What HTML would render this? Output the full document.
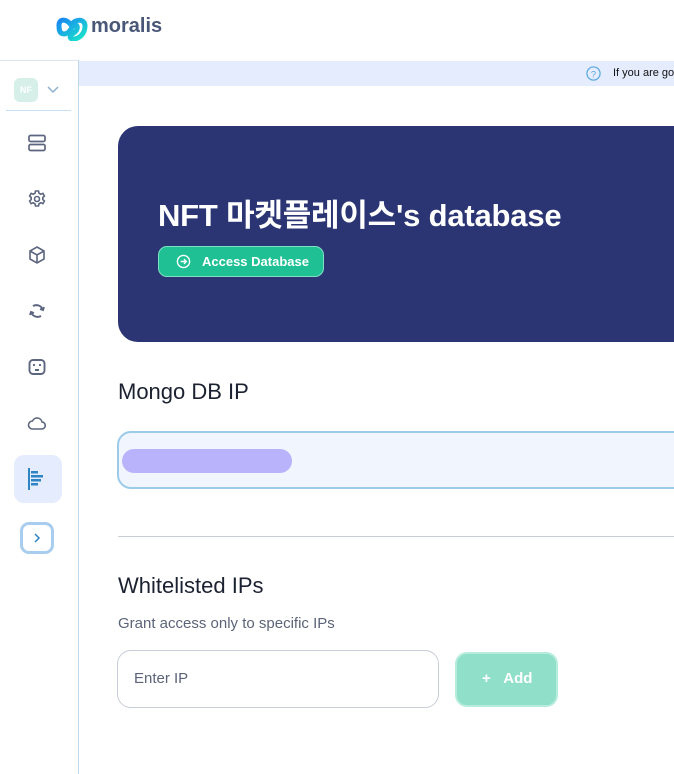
<!DOCTYPE html>
<html><head><meta charset="utf-8"><style>
*{box-sizing:border-box;margin:0;padding:0}
body{width:674px;height:774px;overflow:hidden;background:#fff;font-family:"Liberation Sans","Noto Sans CJK KR",sans-serif;position:relative}
.a{position:absolute}
.ic{position:absolute;left:27px;width:20px;height:20px}
</style></head><body>
<!-- logo -->
<svg class="a" style="left:55px;top:16px" width="34" height="25" viewBox="0 0 34 25">
<defs><linearGradient id="g" x1="0" y1="0" x2="1" y2="1"><stop offset="0" stop-color="#1a88f2"/><stop offset="1" stop-color="#19e6c9"/></linearGradient></defs>
<path d="M4 9 C4 3 11 2 16 9 C21 2 30 3 30 10 C30 18 24 23 18 23 C15 23 14 20 17 18 C21 16 23 13 22 10 C21 8 18 9 16 13 C13 18 9 19 6 17 C4 15 4 12 4 9Z" fill="none" stroke="url(#g)" stroke-width="5" stroke-linejoin="round"/>
</svg>
<div class="a" style="left:91px;top:15px;font-size:20px;font-weight:bold;color:#4a5878">moralis</div>
<!-- borders -->
<div class="a" style="left:0;top:60px;width:78px;height:1px;background:#dbe6f2"></div>
<div class="a" style="left:78px;top:60px;width:1px;height:714px;background:#bcd8ea"></div>
<div class="a" style="left:79px;top:61px;width:595px;height:25px;background:#e4ecfd"></div>
<svg class="a" style="left:586px;top:66px" width="15" height="15" viewBox="0 0 16 16"><circle cx="8" cy="8" r="7" fill="none" stroke="#58a8e0" stroke-width="1.3"/><text x="8" y="12" font-size="10" text-anchor="middle" fill="#58a8e0" font-family="Liberation Sans">?</text></svg>
<div class="a" style="left:613px;top:67px;font-size:11px;color:#111;white-space:nowrap">If you are go</div>
<!-- sidebar -->
<div class="a" style="left:14px;top:78px;width:24px;height:24px;border-radius:6px;background:#d6efe9;color:#fff;font-size:9px;font-weight:bold;text-align:center;line-height:24px">NF</div>
<svg class="a" style="left:47px;top:86px" width="12" height="8"><path d="M1 1l5 5 5-5" fill="none" stroke="#8fb0cc" stroke-width="1.5"/></svg>
<div class="a" style="left:6px;top:110px;width:65px;height:1px;background:#c7dff0"></div>
<svg class="ic" style="top:133px" viewBox="0 0 20 20" fill="none" stroke="#5d6680" stroke-width="1.7"><rect x="2" y="2.5" width="16" height="6" rx="1.5"/><rect x="2" y="11.5" width="16" height="6" rx="1.5"/></svg>
<svg class="ic" style="top:189px" viewBox="0 0 20 20" fill="none" stroke="#5d6680" stroke-width="1.6"><circle cx="10" cy="10" r="2.5"/><path d="M8.5 2h3l.5 2.2 1.8 1 2.1-.8 1.5 2.6-1.6 1.5v2l1.6 1.5-1.5 2.6-2.1-.8-1.8 1-.5 2.2h-3l-.5-2.2-1.8-1-2.1.8-1.5-2.6 1.6-1.5v-2L2.6 7l1.5-2.6 2.1.8 1.8-1z"/></svg>
<svg class="ic" style="top:245px" viewBox="0 0 20 20" fill="none" stroke="#5d6680" stroke-width="1.6"><path d="M10 2l7 4v8l-7 4-7-4V6zM3 6l7 4 7-4M10 10v8"/></svg>
<svg class="ic" style="top:301px" viewBox="0 0 20 20" fill="none" stroke="#5d6680" stroke-width="1.9"><path d="M6 5a7 7 0 0 1 10 4M14 15a7 7 0 0 1-10-4"/><path d="M17 6l-1 3-3-1M3 14l1-3 3 1" /></svg>
<svg class="ic" style="top:357px" viewBox="0 0 20 20" fill="none" stroke="#5d6680" stroke-width="1.9"><rect x="2.5" y="3" width="15" height="14" rx="3.5"/><path d="M7 7v2M13 7v2M8 13h4"/></svg>
<svg class="ic" style="top:413px" viewBox="0 0 20 20" fill="none" stroke="#5d6680" stroke-width="1.6"><path d="M5.5 16h9a3.5 3.5 0 0 0 .5-7 5 5 0 0 0-9.5-1A4 4 0 0 0 5.5 16z"/></svg>
<div class="a" style="left:14px;top:455px;width:48px;height:48px;border-radius:10px;background:#e4ecfd"></div>
<svg class="a" style="left:28px;top:468px" width="20" height="22" viewBox="0 0 20 22" fill="#2f84c4"><rect x="0" y="0" width="2" height="22"/><rect x="3" y="3" width="7" height="2.5"/><rect x="3" y="7" width="12" height="2.5"/><rect x="3" y="11" width="10" height="2.5"/><rect x="3" y="15" width="7" height="2.5"/></svg>
<div class="a" style="left:20px;top:522px;width:34px;height:32px;border-radius:9px;border:3px solid #a9cdef;background:#fff"></div>
<svg class="a" style="left:33px;top:533px" width="8" height="10"><path d="M2 1l4 4-4 4" fill="none" stroke="#2f84c4" stroke-width="1.5"/></svg>
<!-- banner -->
<div class="a" style="left:118px;top:126px;width:600px;height:216px;border-radius:20px;background:#2b3574"></div>
<div class="a" style="left:158px;top:190px;font-size:31px;font-weight:bold;color:#fff;white-space:nowrap;letter-spacing:-0.2px">NFT 마켓플레이스's database</div>
<div class="a" style="left:158px;top:246px;width:166px;height:31px;border-radius:9px;background:#20c095;border:1.5px solid #7fe0c5"></div>
<svg class="a" style="left:176px;top:254px" width="15" height="15" viewBox="0 0 16 16" fill="none" stroke="#fff" stroke-width="1.5"><circle cx="8" cy="8" r="6.5"/><path d="M5 8h6M8.5 5.5L11 8l-2.5 2.5"/></svg>
<div class="a" style="left:202px;top:254px;font-size:13px;font-weight:bold;color:#fff">Access Database</div>
<!-- mongo -->
<div class="a" style="left:118px;top:379px;font-size:22px;color:#1b2130">Mongo DB IP</div>
<div class="a" style="left:117px;top:431px;width:600px;height:58px;border-radius:14px;background:#f0f5fe;border:2px solid #9ccbe8"></div>
<div class="a" style="left:122px;top:449px;width:170px;height:24px;border-radius:12px;background:#b9b3fb"></div>
<div class="a" style="left:118px;top:536px;width:556px;height:1px;background:#c8cdd8"></div>
<div class="a" style="left:118px;top:573px;font-size:22px;color:#1b2130">Whitelisted IPs</div>
<div class="a" style="left:118px;top:615px;font-size:15px;color:#5b6478">Grant access only to specific IPs</div>
<div class="a" style="left:117px;top:650px;width:322px;height:58px;border-radius:14px;border:1px solid #c8cdd8;background:#fff"></div>
<div class="a" style="left:134px;top:670px;font-size:15px;color:#5b6478">Enter IP</div>
<div class="a" style="left:455px;top:652px;width:103px;height:55px;border-radius:12px;background:#90dfc9;border:2px solid #b6ecdc"></div>
<div class="a" style="left:482px;top:670px;font-size:15px;font-weight:bold;color:#fff;white-space:nowrap">+&nbsp;&nbsp;&nbsp;Add</div>
</body></html>
